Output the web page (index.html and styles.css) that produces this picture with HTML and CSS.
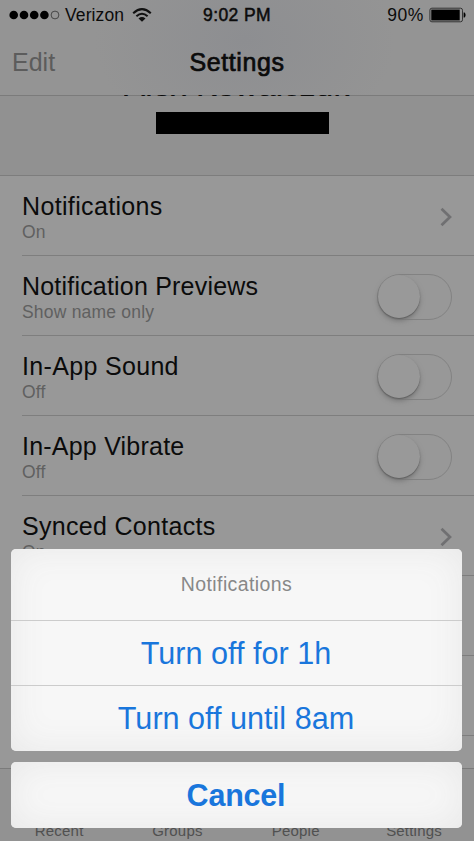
FILE: index.html
```html
<!DOCTYPE html>
<html lang="en">
<head>
<meta charset="utf-8">
<title>Settings</title>
<link rel="stylesheet" href="styles.css">
</head>
<body>
<div class="phone">
  <header class="header">
    <div class="status">
      <div class="carrier">
        <svg class="signal" width="52" height="10" viewBox="0 0 52 10"><circle cx="4.7" cy="5" r="4.3"/><circle cx="15" cy="5" r="4.3"/><circle cx="25.2" cy="5" r="4.3"/><circle cx="35.4" cy="5" r="4.3"/><circle class="empty" cx="46" cy="5" r="3.9"/></svg>
        <span class="t-carrier">Verizon</span>
        <svg class="wifi" width="20" height="14" viewBox="0 0 20 14"><path d="M1.2 5.2Q10-2.8 18.8 5.2M4.4 8.3Q10 3.2 15.6 8.3"/><path class="dot" d="M6.5 10.4Q10 7.6 13.5 10.4L10 13.8Z"/></svg>
      </div>
      <span class="t-time">9:02 PM</span>
      <div class="power">
        <span class="t-power">90%</span>
        <svg width="38" height="16" viewBox="0 0 38 16"><rect class="shell" x=".9" y="1.2" width="32.6" height="13.6" rx="2"/><rect x="2.3" y="2.6" width="28.4" height="10.8"/><path d="M34.6 5.5H35.6Q37.6 8 35.6 10.5H34.6Z"/></svg>
      </div>
    </div>
    <div class="nav">
      <span class="t-edit">Edit</span>
      <h1 class="t-title">Settings</h1>
      <span></span>
    </div>
  </header>
  <section class="profile">
    <div class="name-clip"><span class="t-name">Alex Kowalczuk</span></div>
    <div class="redacted"></div>
  </section>
  <main class="list">
    <div class="row"><div><p class="label l1">Notifications</p><p class="value">On</p></div><svg class="chevron" width="13" height="20" viewBox="0 0 13 20"><path d="M1.5 1.7L10 10L1.5 18.3"/></svg></div>
    <div class="row"><div><p class="label l2">Notification Previews</p><p class="value">Show name only</p></div><i class="switch"></i></div>
    <div class="row"><div><p class="label l3">In-App Sound</p><p class="value">Off</p></div><i class="switch"></i></div>
    <div class="row"><div><p class="label l4">In-App Vibrate</p><p class="value">Off</p></div><i class="switch"></i></div>
    <div class="row"><div><p class="label l5">Synced Contacts</p><p class="value">On</p></div><svg class="chevron" width="13" height="20" viewBox="0 0 13 20"><path d="M1.5 1.7L10 10L1.5 18.3"/></svg></div>
    <div class="row"></div>
    <div class="row"></div>
    <div class="row last"></div>
  </main>
  <nav class="tabs"><span>Recent</span><span>Groups</span><span>People</span><span>Settings</span></nav>
  <div class="sheet">
    <div class="group">
      <div class="heading"><span class="t-heading">Notifications</span></div>
      <div class="action"><span class="t-hour">Turn off for 1h</span></div>
      <div class="action second"><span class="t-until">Turn off until 8am</span></div>
    </div>
    <div class="cancel"><span class="t-cancel">Cancel</span></div>
  </div>
</div>
</body>
</html>
```
FILE: styles.css
```css
* { box-sizing: border-box; margin: 0; padding: 0; }
body { font-family: "Liberation Sans", Arial, sans-serif; overflow: hidden; background: #989898; }
.phone { position: relative; width: 474px; height: 841px; overflow: hidden; display: flex; flex-direction: column; color: #0b0b0b; }
span, p, h1 { white-space: nowrap; }
.header { height: 96px; flex: none; border-bottom: 1px solid #7b7b7b; background: radial-gradient(ellipse 150px 110px at 245px 40px, #8d8e91, #949494); }
.status { height: 30px; display: grid; grid-template-columns: 1fr auto 1fr; align-items: center; padding: 0 7px 0 9px; font-size: 17.5px; line-height: 30px; }
.carrier, .power { display: flex; align-items: center; }
.power { justify-content: flex-end; gap: 5px; }
.signal { margin-right: 4px; }
.signal .empty { fill: none; stroke: #333; stroke-width: .8; }
.t-carrier { letter-spacing: .1px; }
.wifi { margin-left: 8px; }
.wifi path { fill: none; stroke: #111; stroke-width: 2.1; }
.wifi .dot { fill: #111; stroke: none; }
.shell { fill: none; stroke: #333; stroke-width: 1; }
.t-time { -webkit-text-stroke: .5px; letter-spacing: .4px; margin-right: 2px; }
.t-power { letter-spacing: .6px; }
.nav { height: 65px; display: grid; grid-template-columns: 1fr auto 1fr; padding: 0 12px; line-height: 65px; }
.t-edit { font-size: 25px; color: #5c5c5c; }
.t-title { font-size: 25px; font-weight: 400; -webkit-text-stroke: .7px; letter-spacing: .6px; }
.profile { height: 80px; flex: none; background: #919191; border-bottom: 1px solid #7d7d7d; display: flex; flex-direction: column; align-items: center; }
.name-clip { height: 1px; margin-top: -1px; overflow: hidden; display: flex; align-items: flex-end; }
.t-name { font-size: 31px; line-height: 36px; margin-bottom: -8px; letter-spacing: .6px; -webkit-text-stroke: .4px; }
.redacted { width: 173px; height: 22px; margin: 16px 0 0 11px; background: #000; }
.list { height: 592px; flex: none; overflow: hidden; padding-left: 22px; }
.row { height: 80px; border-bottom: 1px solid #7e7e7e; display: flex; justify-content: space-between; padding: 16px 22px 0 0; }
.label { font-size: 25px; line-height: 29px; }
.l1 { letter-spacing: .35px; }
.l2 { letter-spacing: .2px; }
.l3 { letter-spacing: .33px; }
.l4 { letter-spacing: .22px; }
.l5 { letter-spacing: .3px; }
.value { font-size: 17.5px; line-height: 23px; color: #606060; letter-spacing: .2px; }
.chevron { margin: 15px -1px 0 0; }
.chevron path { fill: none; stroke: #707072; stroke-width: 2.7; }
.switch { position: relative; width: 75px; height: 46px; margin-top: 2px; border: 1.5px solid #828282; border-radius: 23px; }
.switch::before { content: ""; position: absolute; left: 0; top: 0; width: 42px; height: 43px; border-radius: 50%; background: #999; box-shadow: 0 1px 1px #606060, 0 3px 5px #777; }
.tabs { flex: 1; border-top: 1px solid #7b7b7b; background: #929292; display: grid; grid-template-columns: repeat(4, 118.3px); justify-items: center; align-items: end; padding-bottom: 1px; font-size: 15px; line-height: 19px; color: #505050; letter-spacing: .2px; }
.sheet { position: absolute; left: 11px; top: 549px; width: 451px; display: flex; flex-direction: column; gap: 11px; color: #1976dc; }
.group, .cancel { border-radius: 5px; background: #f7f7f7; overflow: hidden; box-shadow: inset 0 0 36px #e8e8e8; }
.group { height: 202px; }
.heading, .action, .cancel { display: flex; justify-content: center; align-items: center; }
.heading { height: 72px; border-bottom: 1px solid #ccc; color: #888; font-size: 19.5px; }
.t-heading { letter-spacing: .4px; }
.action { height: 65px; padding-right: 1px; font-size: 30.6px; border-bottom: 1px solid #ccc; }
.action.second { border: 0; }
.cancel { height: 66px; padding-right: 1px; font-size: 30.5px; }
.t-cancel { font-weight: 700; letter-spacing: -.2px; }
```
